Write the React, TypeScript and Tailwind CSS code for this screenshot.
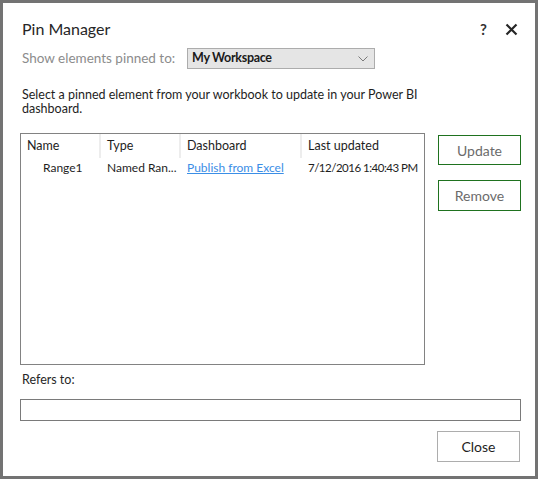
import React from 'react';

const font = { fontFamily: 'Lato, "Segoe UI", "Noto Sans", sans-serif' };

const columns = [
  { key: 'name', label: 'Name', w: 'w-[80px] shrink-0' },
  { key: 'type', label: 'Type', w: 'w-[80px] shrink-0' },
  { key: 'dashboard', label: 'Dashboard', w: 'w-[121px] shrink-0' },
  { key: 'updated', label: 'Last updated', w: 'flex-1 min-w-0' },
];

export default function App() {
  return (
    <div
      className="w-[538px] h-[479px] border-[3px] border-[#737373] bg-white flex flex-col text-[#1e1e1e]"
      style={font}
    >
      {/* title bar */}
      <div className="flex items-center justify-between pl-[19px] pr-[17px] pt-[14px] h-[38px]">
        <div className="text-[16px] leading-[24px] text-[#262626]">Pin Manager</div>
        <div className="flex items-center gap-[18px]">
          <span className="text-[15px] font-bold text-[#333] leading-none">?</span>
          <svg width="13" height="13" viewBox="0 0 13 13">
            <path d="M1.5 1.5 L11.5 11.5 M11.5 1.5 L1.5 11.5" stroke="#262626" strokeWidth="2.2" />
          </svg>
        </div>
      </div>

      {/* pinned-to selector */}
      <div className="flex items-center pl-[19px] mt-[7px]">
        <span className="w-[165px] text-[13.5px] text-[#8c8c8c]">Show elements pinned to:</span>
        <div className="w-[188px] h-[21px] bg-[#e5e5e5] border border-[#acacac] flex items-center justify-between pl-[4px] pr-[6px]">
          <span className="text-[12.5px] font-bold tracking-[-0.3px] text-[#1a1a1a]">My Workspace</span>
          <svg width="10" height="6" viewBox="0 0 10 6">
            <path d="M0.5 0.5 L5 5 L9.5 0.5" fill="none" stroke="#7a7a7a" strokeWidth="1" />
          </svg>
        </div>
      </div>

      <p className="pl-[19px] mt-[19px] w-[420px] text-[12.5px] leading-[14px] text-[#1e1e1e]">
        Select a pinned element from your workbook to update in your Power BI dashboard.
      </p>

      {/* table + actions */}
      <div className="flex pl-[17px] mt-[17px] gap-[13px]">
        <div className="w-[405px] h-[232px] border border-[#828282] flex flex-col">
          <div className="flex h-[24px]">
            {columns.map((c, i) => (
              <div
                key={c.key}
                className={`${c.w} flex items-center pl-[6px] text-[12.5px] ${i < 3 ? 'border-r-2 border-[#ededed]' : ''}`}
              >
                {c.label}
              </div>
            ))}
          </div>
          <div className="flex h-[20px] items-center text-[12px]">
            <div className="w-[80px] shrink-0 pl-[22px]">Range1</div>
            <div className="w-[80px] shrink-0 pl-[6px] whitespace-nowrap">Named Ran...</div>
            <div className="w-[121px] shrink-0 pl-[6px] whitespace-nowrap">
              <span className="text-[#3b8ee6] underline">Publish from Excel</span>
            </div>
            <div className="flex-1 min-w-0 pl-[6px] whitespace-nowrap text-[11.5px] tracking-[-0.5px]">
              7/12/2016 1:40:43 PM
            </div>
          </div>
        </div>
        <div className="flex flex-col gap-[15px] pt-[2px]">
          <button className="w-[83px] h-[30px] border border-[#1f721f] text-[14px] text-[#6b6b6b] bg-white">
            Update
          </button>
          <button className="w-[83px] h-[31px] border border-[#1f721f] text-[14px] text-[#6b6b6b] bg-white">
            Remove
          </button>
        </div>
      </div>

      <div className="pl-[19px] mt-[7px] text-[12.5px] leading-[16px] text-[#262626]">Refers to:</div>
      <div className="ml-[17px] mt-[11px] w-[501px] h-[22px] border border-[#7a7a7a]" />

      <div className="flex justify-end pr-[15px] mt-[10px]">
        <button className="w-[83px] h-[31px] border border-[#adadad] text-[14px] text-[#1e1e1e] bg-white">
          Close
        </button>
      </div>
    </div>
  );
}
